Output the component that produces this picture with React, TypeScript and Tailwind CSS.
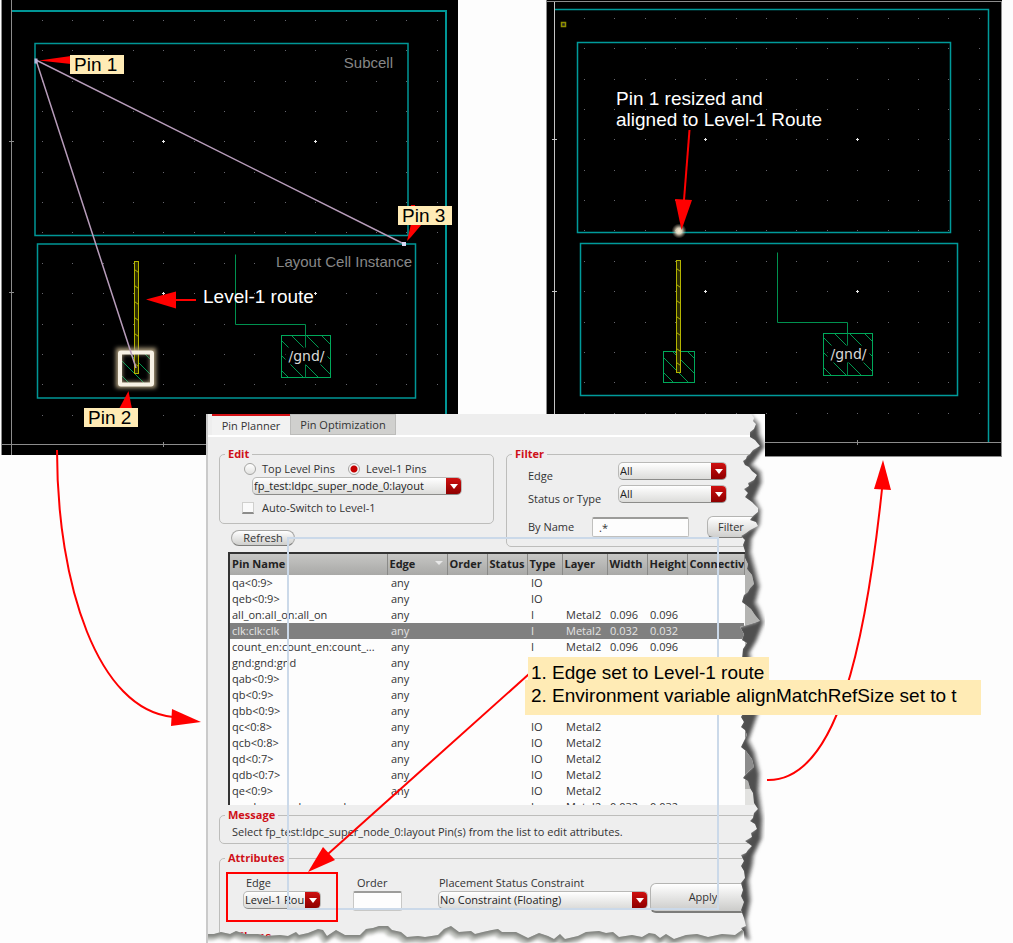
import React from "react";

const plot = "font-['Liberation_Sans',Arial,sans-serif]";

type ViewProps = {
  label: string;
  width: number;
  height: number;
  dotX: number;
  dotY: number;
  children: React.ReactNode;
};

function GridDots({ dotX, dotY }: { dotX: number; dotY: number }) {
  const dots: React.ReactNode[] = [];
  for (let row = 0; row < 14; row++) {
    for (let col = 0; col < 14; col++) {
      const major = (row === 4 || row === 9) && (col === 4 || col === 9);
      const x = Math.round(dotX + col * 30.35);
      const y = Math.round(dotY + row * 30.35);
      dots.push(
        major ? (
          <path key={`${row}-${col}`} d={`M${x - 1} ${y + 0.5}h3M${x + 0.5} ${y - 1}v3`} stroke="#e8e8e8" />
        ) : (
          <rect key={`${row}-${col}`} x={x} y={y} width="1" height="1" fill="#66666e" />
        ),
      );
    }
  }
  return <g>{dots}</g>;
}

function LayoutView({ label, width, height, dotX, dotY, children }: ViewProps) {
  return (
    <svg
      role="img"
      aria-label={label}
      width={width}
      height={height}
      viewBox={`0 0 ${width} ${height}`}
      className="block"
    >
      <defs>
        <pattern id={`hatch${width}`} width="15" height="15" patternUnits="userSpaceOnUse">
          <path d="M0 0L15 15M-1 14L1 16M14 -1L16 1" stroke="#009a50" strokeWidth="1" />
        </pattern>
      </defs>
      <rect width={width} height={height} fill="#000" />
      <GridDots dotX={dotX} dotY={dotY} />
      {children}
    </svg>
  );
}

function Route({ x, y }: { x: number; y: number }) {
  return (
    <g fill="none" stroke="#b4b400">
      <rect x={x} y={y} width="4" height="112" fill="#2e2e00" />
      {[8, 24, 40, 56, 72, 88, 102].map((d) => (
        <path key={d} d={`M${x} ${y + d}l4 3`} />
      ))}
    </g>
  );
}

function Gnd({ x, y, fill }: { x: number; y: number; fill: string }) {
  return (
    <g>
      <path d={`M${x - 46} ${y - 81}v70h70v11`} fill="none" stroke="#00914f" />
      <rect x={x} y={y} width="49" height="42" fill={fill} stroke="#00a85a" />
      <path d={`M${x + 24} ${y}v42`} stroke="#008548" />
      <rect x={x + 4} y={y + 12} width="42" height="17" fill="#000" />
      <text
        x={x + 25}
        y={y + 25}
        textAnchor="middle"
        fontSize="14"
        fill="#d8d8d8"
        fontFamily="'DejaVu Sans', sans-serif"
      >
        /gnd/
      </text>
    </g>
  );
}

function Tag({ className, children }: { className: string; children: React.ReactNode }) {
  return (
    <span
      className={`absolute flex h-[19px] w-[54px] items-center bg-[#ffebb5] px-1 text-[19px] leading-[19px] whitespace-nowrap text-black ${className}`}
    >
      {children}
    </span>
  );
}

function DropDown({
  id,
  value,
  label,
  className,
}: {
  id: string;
  value: string;
  label?: string;
  className: string;
}) {
  return (
    <div
      className={`flex h-[18px] overflow-hidden rounded-[5px] border border-[#b9b9b7] border-b-[#8c8c8a] bg-linear-to-b from-white to-[#dcdcda] ${className}`}
    >
      <select
        id={id}
        aria-label={label}
        className="h-4 min-w-0 flex-1 appearance-none overflow-hidden bg-transparent px-px text-[11px] leading-4 text-[#222] outline-none"
      >
        <option>{value}</option>
      </select>
      <span
        className="pointer-events-none flex w-[15px] items-center justify-center bg-linear-to-b from-[#cf1010] to-[#8e0000]"
        aria-hidden="true"
      >
        <svg width="8" height="5" viewBox="0 0 8 5">
          <path d="M0 0h8L4 5z" fill="#fff" />
        </svg>
      </span>
    </div>
  );
}

const columns = [
  { name: "Pin Name", cls: "w-[157px]" },
  { name: "Edge", cls: "w-[60px]" },
  { name: "Order", cls: "w-[40px]" },
  { name: "Status", cls: "w-[40px]" },
  { name: "Type", cls: "w-[35px]" },
  { name: "Layer", cls: "w-[45px]" },
  { name: "Width", cls: "w-[40px]" },
  { name: "Height", cls: "w-[40px]" },
  { name: "Connectivity", cls: "w-[57px]" },
];

const pins: string[][] = [
  ["qa<0:9>", "IO", "", "", ""],
  ["qeb<0:9>", "IO", "", "", ""],
  ["all_on:all_on:all_on", "I", "Metal2", "0.096", "0.096"],
  ["clk:clk:clk", "I", "Metal2", "0.032", "0.032"],
  ["count_en:count_en:count_...", "I", "Metal2", "0.096", "0.096"],
  ["gnd:gnd:gnd", "", "", "", ""],
  ["qab<0:9>", "", "", "", ""],
  ["qb<0:9>", "", "", "", ""],
  ["qbb<0:9>", "", "", "", ""],
  ["qc<0:8>", "IO", "Metal2", "", ""],
  ["qcb<0:8>", "IO", "Metal2", "", ""],
  ["qd<0:7>", "IO", "Metal2", "", ""],
  ["qdb<0:7>", "IO", "Metal2", "", ""],
  ["qe<0:9>", "IO", "Metal2", "", ""],
  ["seed_en:seed_en:seed_en", "I", "Metal2", "0.032", "0.032"],
];

function PinTable() {
  return (
    <div className="flex h-[253px] overflow-hidden border-t-2 border-l-2 border-[#333] bg-[#fdfdfd]">
      <table className="w-[514px] shrink-0 table-fixed self-start border-collapse text-left text-[11px]">
        <thead>
          <tr className="h-[21px] bg-linear-to-b from-[#c6c6c4] to-[#a9a9a7]">
            {columns.map((c) => (
              <th
                key={c.name}
                className={`overflow-hidden border-r border-[#8a8a88] p-0 pb-[2px] pl-[2px] leading-[18px] font-bold whitespace-nowrap text-[#222] ${c.cls}`}
              >
                {c.name === "Edge" ? (
                  <span className="flex items-center justify-between pr-1">
                    Edge
                    <svg width="8" height="5" viewBox="0 0 8 5" aria-hidden="true">
                      <path d="M0 0h8L4 4z" fill="#e8e8e8" />
                    </svg>
                  </span>
                ) : (
                  c.name
                )}
              </th>
            ))}
          </tr>
        </thead>
        <tbody>
          {pins.map((p, i) => (
            <tr key={p[0]} className={i === 3 ? "h-4 bg-[#808080] text-[#e4e4e4]" : "h-4 text-[#333]"}>
              <td className="overflow-hidden p-0 pl-[2px] leading-4 whitespace-nowrap">{p[0]}</td>
              <td className="p-0 pl-1 leading-4">any</td>
              <td className="p-0" />
              <td className="p-0" />
              <td className="p-0 pl-1 leading-4">{p[1]}</td>
              <td className="p-0 pl-1 leading-4">{p[2]}</td>
              <td className="p-0 pl-[3px] leading-4">{p[3]}</td>
              <td className="p-0 pl-[3px] leading-4">{p[4]}</td>
              <td className="p-0" />
            </tr>
          ))}
        </tbody>
      </table>
      <div className="flex flex-1 flex-col justify-between bg-[#b4b4b2]">
        <span className="h-[20px]" />
        <span className="h-[130px]" />
        <span className="h-[50px] bg-[#8c8c8c]" />
        <span className="h-[16px] bg-[#e2e2e0]" />
      </div>
    </div>
  );
}

const sideCut =
  "M751 414L754 418L753 421L756 424L754 429L750 432L750 437L755 440L760 446L753 450L750 454L747 456L746 459L743 461L745 465L749 467L752 471L757 475L754 480L748 483L749 486L744 489L748 493L745 497L752 502L758 508L758 512L753 516L750 520L756 522L758 526L750 530L746 533L741 536L745 540L743 545L745 551L745 558L748 564L747 569L752 575L754 584L750 588L748 592L744 595L742 602L746 605L751 609L755 615L760 621L750 624L740 627L744 634L742 640L747 643L743 649L742 660L744 712L741 717L744 722L741 727L745 730L747 735L744 741L741 747L746 751L752 759L754 767L749 771L746 774L743 778L748 781L750 788L753 793L754 803L758 809L754 813L753 818L750 821L755 824L757 829L751 833L752 837L745 841L752 846L748 850L746 853L741 855L744 861L741 866L744 871L745 878L741 883L743 890L741 896L744 902L741 910L744 918L746 926L741 928L744 932";
const sideShadow =
  "L750 940L747 920L751 900L749 880L753 864L754 855L762 838L763 818L759 790L760 773L755 752L749 740L756 720L760 708L750 652L757 640L764 622L760 610L756 602L760 586L756 570L751 552L752 538L760 524L761 510L755 498L762 482L761 472L752 464L765 446L760 434L759 424Z";
const bottomCut =
  "M206 934L214 934L221 932L230 934L236 931L245 934L258 934L266 936L280 935L288 936L296 932L299 935L308 933L318 929L323 930L327 936L336 930L345 935L360 935L366 929L373 928L379 926L388 926L392 930L401 932L407 937L418 936L425 937L438 935L444 929L451 926L459 932L471 931L475 934L483 932L492 930L498 929L502 932L516 932L520 934L528 938L539 933L548 936L554 939L560 934L565 939L578 936L586 932L599 931L606 933L613 932L619 937L632 935L642 937L649 933L655 934L660 938L666 934L674 939L686 935L697 934L708 937L722 934L735 935L742 930L744 932";

function TornEdge() {
  return (
    <svg
      width="559"
      height="529"
      viewBox="206 414 559 529"
      className="pointer-events-none absolute top-0 -left-[2px]"
      aria-hidden="true"
    >
      <defs>
        <clipPath id="sideClip">
          <path d={`${sideCut}L744 943H765V414Z`} />
        </clipPath>
        <clipPath id="bottomClip">
          <path d={`${bottomCut}L765 932V943H206Z`} />
        </clipPath>
        <filter id="soft" x="-20%" y="-20%" width="140%" height="140%">
          <feGaussianBlur stdDeviation="1.4" />
        </filter>
      </defs>
      <path d={`${sideCut}L744 943H765V414Z`} fill="#fdfdfd" />
      <path d={`${bottomCut}L765 932V943H206Z`} fill="#fdfdfd" />
      <g clipPath="url(#bottomClip)" fill="none">
        <path d={bottomCut} stroke="#c0c2be" strokeWidth="9" filter="url(#soft)" transform="translate(-2 2)" />
        <path d={bottomCut} stroke="#848682" strokeWidth="6" filter="url(#soft)" />
      </g>
      <g clipPath="url(#sideClip)">
        <path d={`${sideCut}${sideShadow}`} fill="#b0b0b0" stroke="#b8b8b8" strokeWidth="2" filter="url(#soft)" />
        <path d={`${sideCut}${sideShadow}`} fill="#505050" filter="url(#soft)" transform="translate(-2 1)" />
      </g>
    </svg>
  );
}

const legend = "ml-[5px] px-[3px] text-[11px] leading-[14px] font-bold text-[#cf1018]";
const group = "rounded-[5px] border border-[#bdbdbb]";

function PinPlanner() {
  return (
    <section
      aria-label="Pin Planner"
      className="absolute top-[414px] left-[206px] h-[529px] w-[559px] overflow-hidden border-l-2 border-[#cacaca] bg-[#eeeeee] font-['Open_Sans','Noto_Sans',sans-serif] text-[11px] text-[#333]"
    >
      <div className="flex h-[23px] border-b-2 border-white pl-1" role="tablist">
        <button
          role="tab"
          aria-selected="true"
          className="w-[78px] border-t-2 border-[#d41217] bg-[#f2f2f2] text-[11px] leading-5"
        >
          Pin Planner
        </button>
        <button role="tab" aria-selected="false" className="w-[106px] border border-[#bcbcba] bg-[#d0d0ce] leading-5">
          Pin Optimization
        </button>
      </div>

      <div className="mt-[10px] ml-[11px] flex h-[100px] gap-3">
        <div className="w-[275px] shrink-0">
          <fieldset className={`h-[77px] ${group}`}>
            <legend className={legend}>Edit</legend>
            <div className="flex h-4 items-center pl-6">
              <input
                id="top"
                type="radio"
                name="level"
                className="size-3 appearance-none rounded-full border border-[#a5a5a3] bg-linear-to-b from-white to-[#e2e2e0]"
              />
              <label htmlFor="top" className="w-[92px] pl-[6px]">
                Top Level Pins
              </label>
              <input
                id="l1"
                type="radio"
                name="level"
                defaultChecked
                className="size-3 appearance-none rounded-full border border-[#a5a5a3] bg-[radial-gradient(circle,#c40000_0_3px,#f8f8f8_4px)]"
              />
              <label htmlFor="l1" className="pl-[6px]">
                Level-1 Pins
              </label>
            </div>
            <DropDown id="cell" label="Cell" value="fp_test:ldpc_super_node_0:layout" className="ml-8 w-[210px]" />
            <div className="mt-[5px] flex h-4 items-center pl-[22px]">
              <input
                id="auto"
                type="checkbox"
                className="size-3 appearance-none border border-[#d0d0ce] border-b-2 border-b-[#8c8c8a] bg-[#fafafa]"
              />
              <label htmlFor="auto" className="pl-2">
                Auto-Switch to Level-1
              </label>
            </div>
          </fieldset>
          <button className="mt-[6px] ml-3 h-4 w-16 rounded-full border border-[#a8a8a6] border-b-[#7c7c7a] bg-linear-to-b from-white to-[#cfcfcd] leading-[14px]">
            Refresh
          </button>
        </div>
        <fieldset className={`h-[100px] w-[280px] shrink-0 ${group}`}>
          <legend className={legend}>Filter</legend>
          <div className="grid auto-rows-[23px] grid-cols-[90px_1fr] items-start pl-[21px]">
            <label htmlFor="fedge" className="pt-2 leading-[14px]">
              Edge
            </label>
            <DropDown id="fedge" value="All" className="mt-px w-[109px]" />
            <label htmlFor="fstatus" className="pt-2 leading-[14px]">
              Status or Type
            </label>
            <DropDown id="fstatus" value="All" className="mt-px w-[109px]" />
          </div>
          <div className="mt-[9px] flex items-center pl-[21px]">
            <label htmlFor="fname" className="w-16">
              By Name
            </label>
            <input
              id="fname"
              defaultValue=".*"
              className="h-5 w-[97px] rounded-[2px] border border-[#c0c0be] border-t-2 border-t-[#9c9c9a] bg-[#fdfdfd] px-[6px] text-[11px] outline-none"
            />
            <button className="ml-[18px] h-[22px] w-[70px] rounded-[6px] border border-[#b4b4b2] border-b-[#7c7c7a] bg-linear-to-b from-white to-[#cfcfcd] pl-[10px] text-left">
              Filter
            </button>
          </div>
        </fieldset>
      </div>

      <div className="mt-[5px] ml-5">
        <PinTable />
      </div>

      <fieldset className={`mt-[3px] ml-[11px] h-9 w-[570px] ${group}`}>
        <legend className={legend}>Message</legend>
        <p className="pl-3 leading-5">Select fp_test:ldpc_super_node_0:layout Pin(s) from the list to edit attributes.</p>
      </fieldset>

      <fieldset className={`mt-[7px] ml-[11px] h-[100px] w-[570px] ${group}`}>
        <legend className={legend}>Attributes</legend>
        <div className="mt-[10px] flex items-start pl-[23px]">
          <div className="w-[110px]">
            <label htmlFor="aedge" className="block pl-[3px] leading-4">
              Edge
            </label>
            <DropDown id="aedge" value="Level-1 Route" className="w-[78px]" />
          </div>
          <div className="w-[85px]">
            <label htmlFor="aorder" className="block pl-1 leading-4">
              Order
            </label>
            <input
              id="aorder"
              className="h-5 w-[49px] rounded-[2px] border border-[#c8c8c6] border-t-2 border-t-[#9c9c9a] bg-[#fdfdfd] outline-none"
            />
          </div>
          <div className="w-[212px]">
            <label htmlFor="aplace" className="block pl-px leading-4">
              Placement Status Constraint
            </label>
            <DropDown id="aplace" value="No Constraint (Floating)" className="w-[210px]" />
          </div>
          <button className="mt-2 h-[30px] w-[106px] self-center rounded-[6px] border border-[#b4b4b2] border-b-2 border-b-[#7c7c7a] bg-linear-to-b from-white to-[#cbcbc9]">
            Apply
          </button>
        </div>
        <h3 className="mt-4 pl-[18px] leading-[14px] font-bold text-[#cf1018]">Shape</h3>
      </fieldset>

      <TornEdge />
    </section>
  );
}

export default function App() {
  return (
    <main className={`relative min-h-screen overflow-hidden bg-[#fdfdfd] ${plot}`}>
      <div className="flex items-start gap-[88px] pl-px">
        <figure className="relative shrink-0">
          <LayoutView label="Cell layout before pin placement" width={457} height={455} dotX={41} dotY={20}>
            <path d="M.5 0V455M10.5 0V455M0 444.5H457M8 141.5h5M8 292.5h5M162.5 442v5" stroke="#8c8c8c" />
            <g fill="none" stroke="#009696" strokeWidth="1">
              <path d="M11 11H445V444" strokeWidth="2" />
              <path d="M34 43.500H407V235.500H34Z" strokeWidth="1.500" />
              <path d="M36.500 244H414.500V398H36.500Z" strokeWidth="1.500" />
            </g>
            <Gnd x={280.5} y={335.5} fill="url(#hatch457)" />
            <rect x="120" y="353" width="31" height="31" fill="url(#hatch457)" />
            <Route x={133.5} y={261.5} />
            <defs>
              <filter id="glow" x="-30%" y="-30%" width="160%" height="160%">
                <feGaussianBlur stdDeviation="2" />
              </filter>
            </defs>
            <rect x="118" y="351" width="34" height="34" fill="none" stroke="#b0a080" strokeWidth="6" filter="url(#glow)" />
            <rect x="119" y="352.500" width="32" height="32" rx="1" fill="none" stroke="#f7f1e4" strokeWidth="4" />
            <path d="M135 368L35 60L403 244" fill="none" stroke="#b79cba" strokeWidth="1.500" />
            <rect x="33.500" y="58.500" width="3" height="5" fill="#b9b5dc" />
            <rect x="401" y="242" width="4" height="4" fill="#d8d8f4" />
            <g fill="#f00">
              <path d="M38 60.500L70 56V64Z" />
              <path d="M406 241L410 224H421L410 237ZM410 205h4v2h-4z" />
              <path d="M145 299.500L175 291.500V308.500Z" />
              <path d="M175 299h20v2h-20z" />
              <path d="M127.500 391L131 409H118Z" />
            </g>
          </LayoutView>
          <Tag className="top-[55px] left-[69px]">Pin 1</Tag>
          <Tag className="top-[206px] left-[397px]">Pin 3</Tag>
          <Tag className="top-[408px] left-[83px]">Pin 2</Tag>
          <span className="absolute top-[54px] right-[65px] text-[15px] leading-[18px] text-[#878787]">Subcell</span>
          <span className="absolute top-[253px] right-[46px] text-[15px] leading-[18px] whitespace-nowrap text-[#878787]">
            Layout Cell Instance
          </span>
          <span className="absolute top-[286px] left-[202px] text-[19px] leading-[21px] whitespace-nowrap text-white">
            Level-1 route
          </span>
        </figure>

        <figure className="relative shrink-0">
          <LayoutView label="Cell layout after pin placement" width={456} height={457} dotX={38} dotY={18}>
            <path d="M.5 0V457M455.500 1V457M0 1.500H456M0 456.500H456M0 442.500H456M311.500 440v5" stroke="#8c8c8c" />
            <path d="M8.500 2V457M6 139.500h5M6 291.500h5" stroke="#c4c4c4" />
            <g fill="none" stroke="#009a9a" strokeWidth="1.500">
              <path d="M9 9.500H442.500V442" />
              <path d="M31.500 42.500H404.500V232.500H31.500Z" />
              <path d="M34.500 243.500H411.500V395.500H34.500Z" />
            </g>
            <rect x="15.500" y="22.500" width="4" height="4" fill="#222" stroke="#8f8f00" strokeWidth="1.500" />
            <Gnd x={277.5} y={333.5} fill="url(#hatch456)" />
            <rect x="117.500" y="351.500" width="31" height="31" fill="url(#hatch456)" stroke="#00a85a" />
            <Route x={130.5} y={260.5} />
            <defs>
              <radialGradient id="spot">
                <stop offset="0" stopColor="#fff0d4" />
                <stop offset="0.400" stopColor="#ecdfc8" stopOpacity="0.900" />
                <stop offset="1" stopColor="#a09880" stopOpacity="0" />
              </radialGradient>
            </defs>
            <circle cx="133" cy="231" r="7.500" fill="url(#spot)" />
            <path d="M143.500 130L138 200" stroke="#f00" strokeWidth="2" />
            <path d="M129 199L146 200L135.500 230Z" fill="#f00" />
          </LayoutView>
          <p className="absolute top-[88px] left-[70px] text-[19px] leading-[21px] whitespace-nowrap text-white">
            Pin 1 resized and
            <br />
            aligned to Level-1 Route
          </p>
        </figure>
      </div>

      <PinPlanner />

      <svg
        width="1013"
        height="943"
        viewBox="0 0 1013 943"
        className="pointer-events-none absolute top-0 left-0"
        aria-hidden="true"
      >
        <rect x="288" y="538" width="430" height="371" fill="none" stroke="#cbd9e9" strokeWidth="2" />
        <rect x="227" y="873" width="110" height="48" fill="none" stroke="#f00" strokeWidth="2" />
        <g fill="none" stroke="#f00" strokeWidth="2">
          <path d="M57 450C57 585 98 710 173 717" />
          <path d="M767 780C838 782 866 640 882 489" />
          <path d="M529 674L328 854" />
        </g>
        <g fill="#f00">
          <path d="M201 722L172 709L171 726Z" />
          <path d="M883 460L874 489L891 490Z" />
          <path d="M308 872L323 847L335 860Z" />
        </g>
      </svg>

      <ol className="absolute top-[657px] left-[525px] text-[19px] leading-[23px] whitespace-nowrap text-black">
        <li className="ml-[3px] h-[23px] w-[241px] bg-[#ffebb5] pt-1 pl-[3px]">1. Edge set to Level-1 route</li>
        <li className="h-[35px] w-[456px] bg-[#ffebb5] pt-1 pl-[6px]">
          2. Environment variable alignMatchRefSize set to t
        </li>
      </ol>
    </main>
  );
}
